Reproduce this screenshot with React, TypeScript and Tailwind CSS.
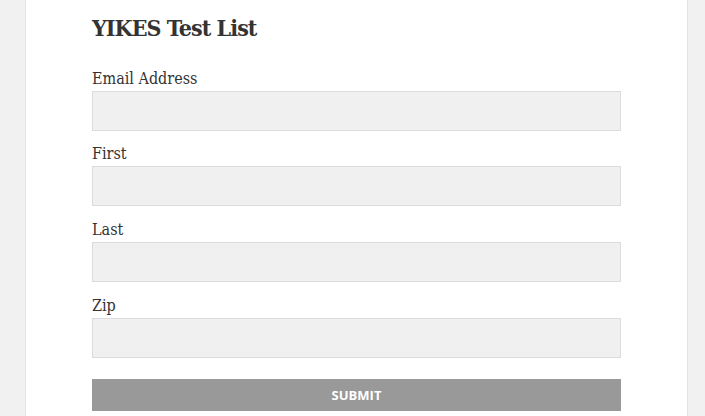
const fields = [
  { label: "Email Address", type: "email", mb: "mb-[11px]" },
  { label: "First", type: "text", mb: "mb-[12px]" },
  { label: "Last", type: "text", mb: "mb-[12px]" },
  { label: "Zip", type: "text", mb: "mb-[12px]" },
];

function SignupForm() {
  return (
    <form className="w-[529px]" onSubmit={(e) => e.preventDefault()}>
      {fields.map((field) => (
        <div key={field.label} className={field.mb}>
          <label className="block h-[24px] text-[16px] leading-[24px] text-[#333333]">
            {field.label}
          </label>
          <input
            type={field.type}
            className="block h-[40px] w-full border border-[#dcdcdc] bg-[#f0f0f0] px-2 outline-none"
          />
        </div>
      ))}
      <button
        type="submit"
        className="mt-[21px] block h-[32px] w-full bg-[#999999] pt-px text-[13px] font-bold text-white"
        style={{ fontFamily: '"Open Sans", "Noto Sans", sans-serif' }}
      >
        SUBMIT
      </button>
    </form>
  );
}

export default function App() {
  return (
    <div className="h-[416px] w-[705px] overflow-hidden bg-[#f1f1f1]">
      <div
        className="ml-[25px] h-[416px] w-[663px] border-x border-[#e4e4e4] bg-white pl-[66px] pt-[12px]"
        style={{ fontFamily: '"DejaVu Serif Condensed", "DejaVu Serif", "Liberation Serif", serif' }}
      >
        <h2 className="mb-[23px] text-[23px] font-bold leading-[32px] tracking-[-0.04em] text-[#333333]">
          YIKES Test List
        </h2>
        <SignupForm />
      </div>
    </div>
  );
}
